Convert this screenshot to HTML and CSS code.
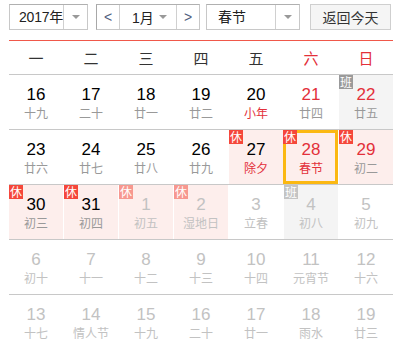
FILE: index.html
```html
<!DOCTYPE html>
<html lang="zh-CN">
<head>
    <meta charset="UTF-8">
    <title>万年历</title>
    <link rel="stylesheet" href="styles.css">
</head>
<body>
    <div class="calendar">
        <!-- Toolbar -->
        <div class="toolbar">
            <div class="select year">
                <span class="label">2017年</span>
                <span class="arrow"><i class="tri"></i></span>
            </div>
            <div class="month-nav">
                <span class="step">&lt;</span>
                <div class="month">
                    <span class="label">1月</span>
                    <i class="tri"></i>
                </div>
                <span class="step">&gt;</span>
            </div>
            <div class="select holiday">
                <span class="label">春节</span>
                <span class="arrow"><i class="tri"></i></span>
            </div>
            <button class="today">返回今天</button>
        </div>

        <!-- Week header -->
        <div class="week-head">
            <span>一</span><span>二</span><span>三</span><span>四</span><span>五</span>
            <span class="red">六</span><span class="red">日</span>
        </div>

        <!-- Days -->
        <div class="row">
            <div class="day"><b>16</b><em>十九</em></div>
            <div class="day"><b>17</b><em>二十</em></div>
            <div class="day"><b>18</b><em>廿一</em></div>
            <div class="day"><b>19</b><em>廿二</em></div>
            <div class="day fest"><b>20</b><em>小年</em></div>
            <div class="day weekend"><b>21</b><em>廿四</em></div>
            <div class="day weekend work"><span class="tag">班</span><b>22</b><em>廿五</em></div>
        </div>
        <div class="row">
            <div class="day"><b>23</b><em>廿六</em></div>
            <div class="day"><b>24</b><em>廿七</em></div>
            <div class="day"><b>25</b><em>廿八</em></div>
            <div class="day"><b>26</b><em>廿九</em></div>
            <div class="day rest fest"><span class="tag">休</span><b>27</b><em>除夕</em></div>
            <div class="day rest fest weekend selected"><span class="tag">休</span><b>28</b><em>春节</em></div>
            <div class="day rest weekend"><span class="tag">休</span><b>29</b><em>初二</em></div>
        </div>
        <div class="row">
            <div class="day rest"><span class="tag">休</span><b>30</b><em>初三</em></div>
            <div class="day rest"><span class="tag">休</span><b>31</b><em>初四</em></div>
            <div class="day rest other"><span class="tag">休</span><b>1</b><em>初五</em></div>
            <div class="day rest other"><span class="tag">休</span><b>2</b><em>湿地日</em></div>
            <div class="day other"><b>3</b><em>立春</em></div>
            <div class="day work other"><span class="tag">班</span><b>4</b><em>初八</em></div>
            <div class="day other"><b>5</b><em>初九</em></div>
        </div>
        <div class="row">
            <div class="day other"><b>6</b><em>初十</em></div>
            <div class="day other"><b>7</b><em>十一</em></div>
            <div class="day other"><b>8</b><em>十二</em></div>
            <div class="day other"><b>9</b><em>十三</em></div>
            <div class="day other"><b>10</b><em>十四</em></div>
            <div class="day other"><b>11</b><em>元宵节</em></div>
            <div class="day other"><b>12</b><em>十六</em></div>
        </div>
        <div class="row last">
            <div class="day other"><b>13</b><em>十七</em></div>
            <div class="day other"><b>14</b><em>情人节</em></div>
            <div class="day other"><b>15</b><em>十九</em></div>
            <div class="day other"><b>16</b><em>二十</em></div>
            <div class="day other"><b>17</b><em>廿一</em></div>
            <div class="day other"><b>18</b><em>雨水</em></div>
            <div class="day other"><b>19</b><em>廿三</em></div>
        </div>
    </div>
</body>
</html>
```

FILE: styles.css
```css
/* General */
body {
    margin: 0;
    background: #fff;
    font-family: "Liberation Sans", Arial, "Noto Sans CJK SC", sans-serif;
    color: #333;
}
.calendar {
    width: 384px;
    padding: 4px 0 0 9px;
}

/* Toolbar */
.toolbar {
    display: flex;
    height: 26px;
    font-size: 14px;
}
.select {
    display: flex;
    box-sizing: border-box;
    height: 26px;
    border: 1px solid #c8c8c8;
    border-top-color: #b0b0b0;
    background: #fff;
}
.select .label {
    flex: 1;
    line-height: 24px;
    padding-left: 10px;
    white-space: nowrap;
    color: #222;
}
.select .arrow {
    width: 23px;
    border-left: 1px solid #d0d0d0;
    display: flex;
    align-items: center;
    justify-content: center;
}
.tri {
    display: block;
    width: 0;
    height: 0;
    border-left: 4px solid transparent;
    border-right: 4px solid transparent;
    border-top: 4px solid #999;
}
.year {
    width: 79px;
}
.year .label {
    padding-left: 9px;
    letter-spacing: -0.2px;
}
.month-nav {
    display: flex;
    box-sizing: border-box;
    height: 26px;
    margin-left: 8px;
    border: 1px solid #c8c8c8;
    border-top-color: #b0b0b0;
    border-left-color: #a8a8a8;
}
.step {
    width: 22px;
    line-height: 24px;
    text-align: center;
    color: #506080;
}
.month {
    display: flex;
    align-items: center;
    width: 58px;
    border-left: 1px solid #d0d0d0;
    border-right: 1px solid #d0d0d0;
    padding-left: 12px;
    box-sizing: border-box;
}
.month .label {
    flex: 1;
    color: #222;
}
.month .tri {
    margin-right: 9px;
}
.holiday {
    width: 94px;
    margin-left: 6px;
}
.holiday .label {
    padding-left: 11px;
}
.today {
    width: 81px;
    height: 26px;
    margin-left: 10px;
    border: 1px solid #cfcfcf;
    background: #f5f5f5;
    font-family: "Noto Sans CJK SC", sans-serif;
    font-size: 14px;
    line-height: 22px;
    color: #333;
    padding: 0;
}

/* Week header */
.week-head {
    display: grid;
    grid-template-columns: repeat(7, 54px);
    column-gap: 1px;
    margin-top: 10px;
    height: 33px;
    border-top: 1px solid #f0584a;
    border-bottom: 1px solid #c8c8c8;
    font-family: "Noto Sans CJK SC", sans-serif;
    font-size: 15px;
    line-height: 33px;
    text-align: center;
    color: #333;
}
.week-head .red {
    color: #e3303a;
}

/* Day grid */
.row {
    display: grid;
    grid-template-columns: repeat(7, 54px);
    column-gap: 1px;
    height: 54px;
    border-bottom: 1px solid #c8c8c8;
}
.row.last {
    border-bottom: none;
}
.day {
    position: relative;
    text-align: center;
    padding-top: 11px;
    box-sizing: border-box;
}
.day b {
    display: block;
    font-weight: normal;
    font-size: 17px;
    line-height: 18px;
    color: #000;
}
.day em {
    display: block;
    font-style: normal;
    font-family: "Noto Sans CJK SC", sans-serif;
    font-size: 12px;
    line-height: 18px;
    color: #999;
}
.day.weekend b,
.day.fest em {
    color: #e3303a;
}
.day.rest {
    background: #fdeeec;
}
.day.work {
    background: #f4f4f4;
}
.day.selected {
    box-shadow: inset 0 0 0 3px #fbb812;
    margin-left: -1px;
    padding-left: 1px;
}
.tag {
    position: absolute;
    top: 0;
    left: 0;
    width: 14px;
    height: 14px;
    font-family: "Noto Sans CJK SC", sans-serif;
    font-size: 12px;
    line-height: 14px;
    color: #fff;
    background: #f5473a;
}
.work .tag {
    background: #9a9a9a;
}
.day.other b,
.day.other em {
    color: #c2c2c2;
}
.other .tag {
    background: #f7988f;
}
.work.other .tag {
    background: #c4c4c4;
}
```
